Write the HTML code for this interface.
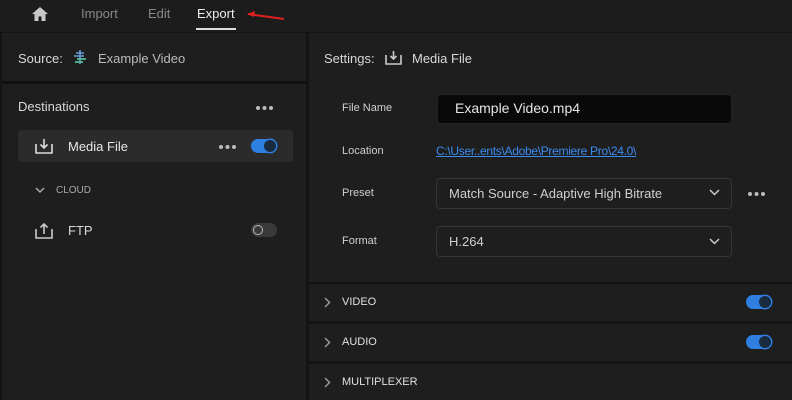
<!DOCTYPE html>
<html><head><style>
*{margin:0;padding:0;box-sizing:border-box}
body{width:792px;height:400px;background:#141414;font-family:"Liberation Sans",sans-serif;position:relative;overflow:hidden;color:#ddd}
.a{position:absolute}
.t{font-size:13px;color:#d8d8d8;white-space:nowrap}
.sm{font-size:11px;color:#cfcfcf}
.tog{position:absolute;width:26px;height:14px;border-radius:7px;background:#2f7fe0}
.tog:after{content:"";position:absolute;right:1px;top:1px;width:12px;height:12px;border-radius:50%;background:#1a2b40;box-shadow:0 0 0 1.5px #2f7fe0}
.box{position:absolute;background:#1e1e1e;border:1px solid #353535;border-radius:4px}
</style></head><body>
<svg width="0" height="0" style="position:absolute"><defs><g id="d"><circle cx="2" cy="2" r="2" fill="#bbb"/><circle cx="8.5" cy="2" r="2" fill="#bbb"/><circle cx="15" cy="2" r="2" fill="#bbb"/></g></defs></svg>
<div class="a" style="left:0;top:0;width:792px;height:32px;background:#1c1c1c"></div>
<svg class="a" style="left:31px;top:6px" width="18" height="16" viewBox="0 0 18 16"><path d="M9 1L1 8h2.5v7h4v-4.5h3V15h4V8H17z" fill="#c8c8c8"/></svg>
<div class="a t" style="left:81px;top:6px;color:#888">Import</div>
<div class="a t" style="left:148px;top:6px;color:#888">Edit</div>
<div class="a t" style="left:197px;top:6px;color:#eee">Export</div>
<div class="a" style="left:196px;top:28px;width:40px;height:2px;background:#ddd"></div>
<svg class="a" style="left:246px;top:10px" width="40" height="12"><path d="M2 4L38 9" stroke="#e02020" stroke-width="2"/><path d="M1 4L9 1L8 7z" fill="#e02020"/></svg>

<div class="a" style="left:2px;top:33px;width:304px;height:367px;background:#1e1e1e"></div>
<div class="a" style="left:2px;top:81px;width:304px;height:3px;background:#111"></div>
<div class="a t" style="left:18px;top:51px">Source:</div>
<svg class="a" style="left:72px;top:49px" width="16" height="16"><path d="M8 1v14M4 4h8M2 7h10M5 10h9M3 13h8" stroke="#6a9ed8" stroke-width="1.6"/><path d="M5 10h9M3 13h8" stroke="#4fc08d" stroke-width="1.6"/></svg>
<div class="a t" style="left:98px;top:51px;color:#bbb">Example Video</div>
<div class="a t" style="left:18px;top:99px">Destinations</div>
<svg class="a" style="left:256px;top:106px" width="18" height="4"><use href="#d"/></svg>
<div class="a" style="left:18px;top:130px;width:275px;height:32px;background:#2b2b2b;border-radius:3px"></div>
<svg class="a" style="left:35px;top:138px" width="18" height="16"><path d="M9 1v9M5.5 6.5L9 10l3.5-3.5M1 6v9h16V6" stroke="#ddd" stroke-width="1.6" fill="none"/></svg>
<div class="a t" style="left:68px;top:139px;color:#e6e6e6">Media File</div>
<svg class="a" style="left:219px;top:145px" width="18" height="4"><use href="#d"/></svg>
<div class="tog" style="left:251px;top:139px"></div>
<svg class="a" style="left:35px;top:186px" width="10" height="8"><path d="M1 2l4 4 4-4" stroke="#aaa" stroke-width="1.5" fill="none"/></svg>
<div class="a" style="left:56px;top:185px;font-size:10px;color:#aaa">CLOUD</div>
<svg class="a" style="left:35px;top:222px" width="18" height="17"><path d="M9 12V2M5.5 5.5L9 2l3.5 3.5M1 7v9h16V7" stroke="#ccc" stroke-width="1.6" fill="none"/></svg>
<div class="a t" style="left:68px;top:223px">FTP</div>
<div class="a" style="left:251px;top:223px;width:26px;height:14px;border-radius:7px;background:#3a3a3a"><div style="position:absolute;left:2px;top:2px;width:10px;height:10px;border-radius:50%;border:1.5px solid #bbb"></div></div>

<div class="a" style="left:309px;top:33px;width:483px;height:249px;background:#1e1e1e"></div>
<div class="a t" style="left:324px;top:51px">Settings:</div>
<svg class="a" style="left:385px;top:50px" width="17" height="15"><path d="M8.5 1v8M5.5 6l3 3 3-3M1 5v9h15V5" stroke="#ccc" stroke-width="1.6" fill="none"/></svg>
<div class="a t" style="left:412px;top:51px">Media File</div>
<div class="a sm" style="left:342px;top:102px">File Name</div>
<div class="box" style="left:437px;top:94px;width:295px;height:30px;background:#090909;border-color:#222"></div>
<div class="a t" style="left:455px;top:100px;font-size:14px;color:#e6e6e6">Example Video.mp4</div>
<div class="a sm" style="left:342px;top:145px">Location</div>
<div class="a" style="left:436px;top:144px;font-size:12px;color:#3b8cf0;text-decoration:underline;letter-spacing:-.3px">C:\User..ents\Adobe\Premiere Pro\24.0\</div>
<div class="a sm" style="left:342px;top:187px">Preset</div>
<div class="box" style="left:436px;top:178px;width:296px;height:31px"></div>
<div class="a t" style="left:449px;top:186px;color:#cfcfcf">Match Source - Adaptive High Bitrate</div>
<svg class="a" style="left:709px;top:189px" width="11" height="7"><path d="M1 1l4.5 4.5L10 1" stroke="#ccc" stroke-width="1.5" fill="none"/></svg>
<svg class="a" style="left:748px;top:192px" width="18" height="4"><use href="#d"/></svg>
<div class="a sm" style="left:342px;top:235px">Format</div>
<div class="box" style="left:436px;top:226px;width:296px;height:31px"></div>
<div class="a t" style="left:449px;top:234px;color:#cfcfcf">H.264</div>
<svg class="a" style="left:709px;top:238px" width="11" height="7"><path d="M1 1l4.5 4.5L10 1" stroke="#ccc" stroke-width="1.5" fill="none"/></svg>

<div class="a" style="left:309px;top:284px;width:483px;height:37px;background:#1e1e1e"></div>
<div class="a" style="left:309px;top:324px;width:483px;height:37px;background:#1e1e1e"></div>
<div class="a" style="left:309px;top:364px;width:483px;height:36px;background:#1e1e1e"></div>
<svg class="a" style="left:324px;top:297px" width="7" height="11"><path d="M1 1l4.5 4.5L1 10" stroke="#999" stroke-width="1.5" fill="none"/></svg>
<div class="a sm" style="left:342px;top:296px;color:#e0e0e0">VIDEO</div>
<div class="tog" style="left:746px;top:295px"></div>
<svg class="a" style="left:324px;top:337px" width="7" height="11"><path d="M1 1l4.5 4.5L1 10" stroke="#999" stroke-width="1.5" fill="none"/></svg>
<div class="a sm" style="left:342px;top:336px;color:#e0e0e0">AUDIO</div>
<div class="tog" style="left:746px;top:335px"></div>
<svg class="a" style="left:324px;top:377px" width="7" height="11"><path d="M1 1l4.5 4.5L1 10" stroke="#999" stroke-width="1.5" fill="none"/></svg>
<div class="a sm" style="left:342px;top:376px;color:#e0e0e0">MULTIPLEXER</div>
</body></html>
